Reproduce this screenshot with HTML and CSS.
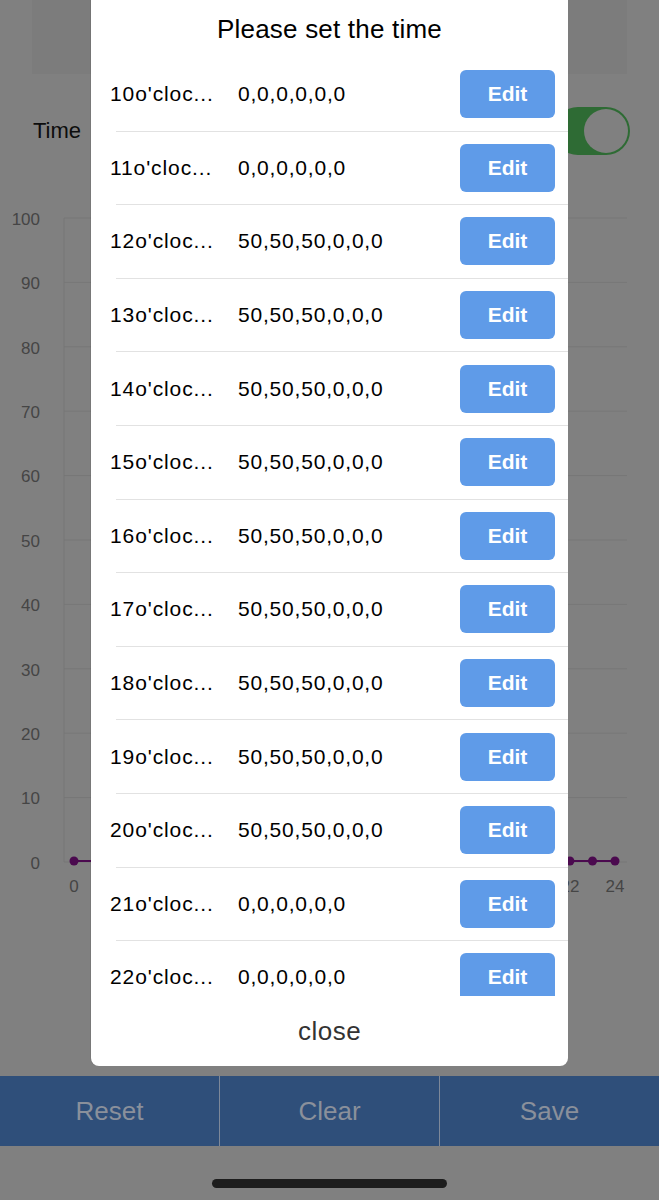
FILE: index.html
```html
<!DOCTYPE html>
<html>
<head>
<meta charset="utf-8">
<link rel="stylesheet" href="styles.css">
</head>
<body>
<div class="page">
  <div class="top-card"></div>
  <div class="time-row">
    <span class="time-label">Time</span>
    <div class="toggle"><div class="knob"></div></div>
  </div>
  <svg class="chart" width="659" height="712" viewBox="0 0 659 712">
    <g stroke="#777777" stroke-width="1">
      <line x1="64" y1="30" x2="627" y2="30"/>
      <line x1="64" y1="94.4" x2="627" y2="94.4"/>
      <line x1="64" y1="158.8" x2="627" y2="158.8"/>
      <line x1="64" y1="223.2" x2="627" y2="223.2"/>
      <line x1="64" y1="287.6" x2="627" y2="287.6"/>
      <line x1="64" y1="352" x2="627" y2="352"/>
      <line x1="64" y1="416.4" x2="627" y2="416.4"/>
      <line x1="64" y1="480.8" x2="627" y2="480.8"/>
      <line x1="64" y1="545.2" x2="627" y2="545.2"/>
      <line x1="64" y1="609.6" x2="627" y2="609.6"/>
      <line x1="64" y1="674" x2="627" y2="674"/>
      <line x1="64" y1="30" x2="64" y2="674"/>
    </g>
    <g class="ylabels" fill="#454545" text-anchor="end">
      <text x="40" y="37">100</text>
      <text x="40" y="101">90</text>
      <text x="40" y="166">80</text>
      <text x="40" y="230">70</text>
      <text x="40" y="294">60</text>
      <text x="40" y="359">50</text>
      <text x="40" y="423">40</text>
      <text x="40" y="488">30</text>
      <text x="40" y="552">20</text>
      <text x="40" y="616">10</text>
      <text x="40" y="681">0</text>
    </g>
    <g class="xlabels" fill="#454545" text-anchor="middle">
      <text x="74" y="704">0</text>
      <text x="570" y="704">22</text>
      <text x="615" y="704">24</text>
    </g>
    <polyline fill="none" stroke="#4b0a4f" stroke-width="2" points="74,673 96.5,673 119,673 141.6,673 164.1,673 186.7,673 209.2,673 231.8,673 254.3,673 276.9,673 299.4,673 321.9,673 344.5,351 367,351 389.6,351 412.1,351 434.7,351 457.2,351 479.8,351 502.3,351 524.8,351 547.4,673 569.9,673 592.5,673 615,673"/>
    <g fill="#4b0a4f">
      <circle cx="74" cy="673" r="4.5"/><circle cx="96.5" cy="673" r="4.5"/><circle cx="119" cy="673" r="4.5"/>
      <circle cx="141.6" cy="673" r="4.5"/><circle cx="164.1" cy="673" r="4.5"/><circle cx="186.7" cy="673" r="4.5"/>
      <circle cx="209.2" cy="673" r="4.5"/><circle cx="231.8" cy="673" r="4.5"/><circle cx="254.3" cy="673" r="4.5"/>
      <circle cx="276.9" cy="673" r="4.5"/><circle cx="299.4" cy="673" r="4.5"/><circle cx="321.9" cy="673" r="4.5"/>
      <circle cx="344.5" cy="351" r="4.5"/><circle cx="367" cy="351" r="4.5"/><circle cx="389.6" cy="351" r="4.5"/>
      <circle cx="412.1" cy="351" r="4.5"/><circle cx="434.7" cy="351" r="4.5"/><circle cx="457.2" cy="351" r="4.5"/>
      <circle cx="479.8" cy="351" r="4.5"/><circle cx="502.3" cy="351" r="4.5"/><circle cx="524.8" cy="351" r="4.5"/>
      <circle cx="547.4" cy="673" r="4.5"/><circle cx="569.9" cy="673" r="4.5"/><circle cx="592.5" cy="673" r="4.5"/>
      <circle cx="615" cy="673" r="4.5"/>
    </g>
  </svg>
  <div class="spacer"></div>
  <div class="bottom-bar">
    <div class="bar-btn">Reset</div>
    <div class="bar-btn">Clear</div>
    <div class="bar-btn">Save</div>
  </div>
  <div class="home-area"><div class="home-indicator"></div></div>
</div>

<div class="modal">
  <div class="modal-title">Please set the time</div>
  <div class="modal-list">
    <div class="row"><span class="row-label">10o'cloc...</span><span class="row-value">0,0,0,0,0,0</span><button class="edit">Edit</button></div>
    <div class="row"><span class="row-label">11o'cloc...</span><span class="row-value">0,0,0,0,0,0</span><button class="edit">Edit</button></div>
    <div class="row"><span class="row-label">12o'cloc...</span><span class="row-value">50,50,50,0,0,0</span><button class="edit">Edit</button></div>
    <div class="row"><span class="row-label">13o'cloc...</span><span class="row-value">50,50,50,0,0,0</span><button class="edit">Edit</button></div>
    <div class="row"><span class="row-label">14o'cloc...</span><span class="row-value">50,50,50,0,0,0</span><button class="edit">Edit</button></div>
    <div class="row"><span class="row-label">15o'cloc...</span><span class="row-value">50,50,50,0,0,0</span><button class="edit">Edit</button></div>
    <div class="row"><span class="row-label">16o'cloc...</span><span class="row-value">50,50,50,0,0,0</span><button class="edit">Edit</button></div>
    <div class="row"><span class="row-label">17o'cloc...</span><span class="row-value">50,50,50,0,0,0</span><button class="edit">Edit</button></div>
    <div class="row"><span class="row-label">18o'cloc...</span><span class="row-value">50,50,50,0,0,0</span><button class="edit">Edit</button></div>
    <div class="row"><span class="row-label">19o'cloc...</span><span class="row-value">50,50,50,0,0,0</span><button class="edit">Edit</button></div>
    <div class="row"><span class="row-label">20o'cloc...</span><span class="row-value">50,50,50,0,0,0</span><button class="edit">Edit</button></div>
    <div class="row"><span class="row-label">21o'cloc...</span><span class="row-value">0,0,0,0,0,0</span><button class="edit">Edit</button></div>
    <div class="row"><span class="row-label">22o'cloc...</span><span class="row-value">0,0,0,0,0,0</span><button class="edit">Edit</button></div>
  </div>
  <div class="modal-close">close</div>
</div>
</body>
</html>
```
FILE: styles.css
```css
* { box-sizing: border-box; }
html, body { margin: 0; padding: 0; }
body {
  width: 659px;
  height: 1200px;
  background: #808080;
  font-family: "Liberation Sans", Arial, sans-serif;
  position: relative;
  overflow: hidden;
}
.page {
  display: flex;
  flex-direction: column;
  height: 1200px;
}
.top-card {
  margin: 0 32px;
  height: 74px;
  background: #7c7c7c;
  flex: none;
}
.time-row {
  height: 114px;
  flex: none;
  display: flex;
  align-items: center;
  justify-content: space-between;
  padding: 0 29px 0 33px;
}
.time-label {
  font-size: 22px;
  color: #0d0d0d;
}
.toggle {
  width: 76px;
  height: 48px;
  border-radius: 24px;
  background: #2e6b34;
  display: flex;
  align-items: center;
  justify-content: flex-end;
  padding-right: 2px;
}
.knob {
  width: 44px;
  height: 44px;
  border-radius: 50%;
  background: #808080;
}
.chart {
  display: block;
  flex: none;
}
.chart text {
  font-family: "Liberation Sans", Arial, sans-serif;
  font-size: 17px;
}
.spacer { flex: 1; }
.bottom-bar {
  height: 70px;
  flex: none;
  background: #2f4f7a;
  display: flex;
}
.bar-btn {
  flex: 1;
  display: flex;
  align-items: center;
  justify-content: center;
  font-size: 26px;
  color: #8a909b;
  border-left: 1px solid #7d8899;
}
.bar-btn:first-child { border-left: none; }
.home-area {
  height: 54px;
  flex: none;
  display: flex;
  justify-content: center;
  padding-top: 33px;
}
.home-indicator {
  width: 235px;
  height: 9px;
  border-radius: 5px;
  background: #1d1d1d;
}

.modal {
  position: absolute;
  left: 91px;
  top: 0;
  width: 477px;
  height: 1066px;
  background: #ffffff;
  border-radius: 0 0 8px 8px;
  display: flex;
  flex-direction: column;
  box-shadow: -1px 0 0 rgba(0,0,0,0.06);
}
.modal-title {
  height: 58px;
  flex: none;
  text-align: center;
  font-size: 26px;
  letter-spacing: 0.2px;
  line-height: 58px;
  color: #000;
}
.modal-list {
  height: 938px;
  flex: none;
  overflow: hidden;
}
.row {
  height: 73.6px;
  display: flex;
  align-items: center;
  padding: 0 13px 0 0;
  border-bottom: 1px solid #e2e2e2;
  margin-left: 25px;
}
.row-label {
  margin-left: -6px;
  width: 112px;
  font-size: 21px;
  letter-spacing: 0.9px;
  color: #000;
  white-space: nowrap;
  flex: none;
}
.row-value {
  margin-left: 16px;
  font-size: 21px;
  letter-spacing: 0.8px;
  color: #000;
  flex: 1;
}
.edit {
  width: 95px;
  height: 48px;
  border: none;
  border-radius: 6px;
  background: #5f9be8;
  color: #ffffff;
  font-family: "Liberation Sans", Arial, sans-serif;
  font-size: 21px;
  font-weight: 600;
  flex: none;
  padding: 0;
}
.modal-close {
  flex: 1;
  display: flex;
  align-items: center;
  justify-content: center;
  font-size: 26px;
  letter-spacing: 0.5px;
  color: #333;
}
```
